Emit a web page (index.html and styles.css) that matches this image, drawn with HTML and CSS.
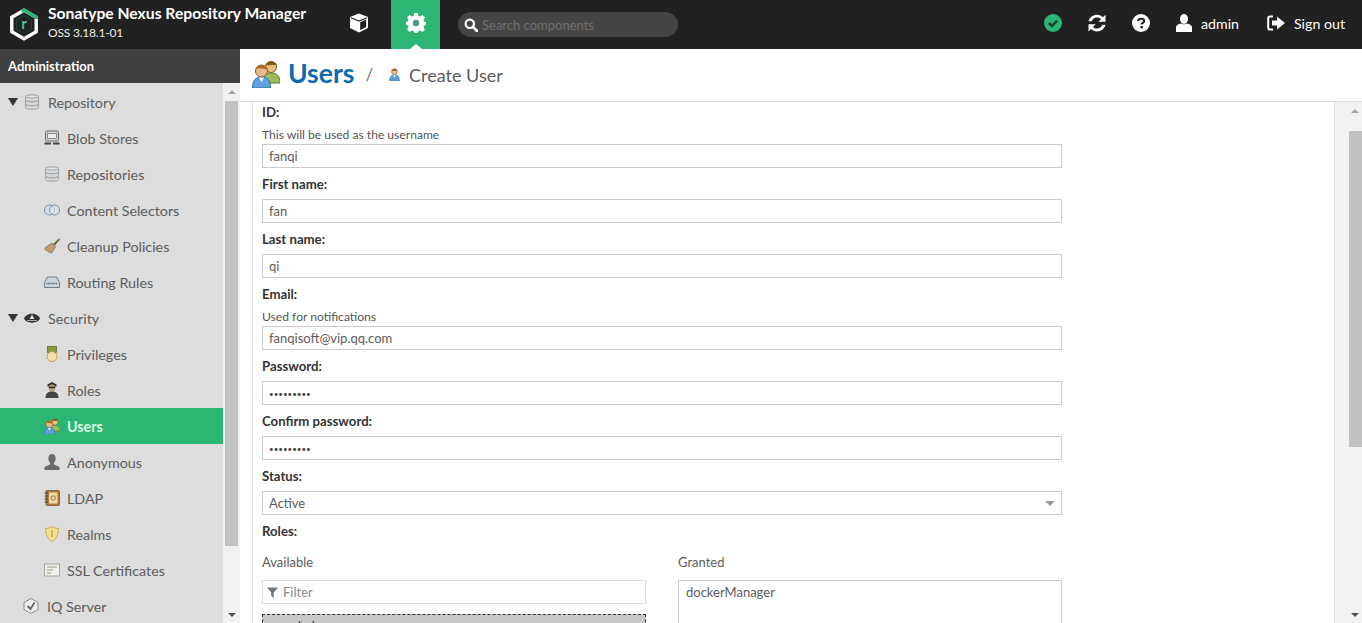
FILE: index.html
```html
<!DOCTYPE html>
<html lang="en">
  <head>
    <meta charset="UTF-8" />
    <meta name="viewport" content="width=device-width, initial-scale=1.0" />
    <title>Create User</title>
    <link rel="stylesheet" href="styles.css">
  </head>
  <body>
    <svg class="defs" width="0" height="0">
      <defs>
        <symbol id="db" viewBox="0 0 16 16">
          <path d="M1.5 2.5C1.5 .2 14.5 .2 14.5 2.5V13.5C14.5 15.8 1.5 15.8 1.5 13.5Z" fill="#d4d6d8" stroke="#a0a4a8"/>
          <path d="M1.5 2.5C3.5 4.5 12.5 4.5 14.5 2.5" fill="#eceeef" stroke="#a0a4a8"/>
          <path d="M1.5 6.5C4 8.3 12 8.3 14.5 6.5M1.5 10.5C4 12.3 12 12.3 14.5 10.5" fill="none" stroke="#9a9ea2"/>
        </symbol>
        <symbol id="person-one" viewBox="0 0 16 16">
          <circle cx="8" cy="4.5" r="3.6" fill="#e8b98a" stroke="#8a5a2b" stroke-width=".7"/>
          <path d="M4.2 3.5C5 .5 11 .5 11.8 3.5C9 3.5 7 3 4.2 3.5Z" fill="#8d5a20"/>
          <path d="M2 16C2 10 4.5 8.5 8 8.5S14 10 14 16Z" fill="#5b9fd6" stroke="#2c6ea6" stroke-width=".7"/>
          <path d="M6.5 9L8 12L9.5 9Z" fill="#fff"/>
        </symbol>
        <symbol id="people" viewBox="0 0 28 28">
          <circle cx="19" cy="7" r="5.5" fill="#e9c07e" stroke="#7b5a20"/>
          <path d="M13.5 5C15 .5 23 0 25 5C21 5 17 5.5 13.5 5Z" fill="#7d5a20"/>
          <path d="M11 23C11 15 14 13 19 13S28 15 28 23Z" fill="#9dbb5c" stroke="#5f7d2b"/>
          <circle cx="9.5" cy="11" r="6" fill="#eab98a" stroke="#8a5a2b"/>
          <path d="M3.5 9C5 3.5 14 3.5 15.5 9C11 9 8 8 3.5 9Z" fill="#b26a22"/>
          <path d="M.5 28C.5 20 4 17 9.5 17S18.5 20 18.5 28Z" fill="#5fa3dc" stroke="#2c6ea6"/>
          <path d="M7 17.5L9.5 22L12 17.5Z" fill="#fff"/>
        </symbol>
      </defs>
    </svg>

    <header class="topbar">
      <div class="brand">
        <svg class="logo" width="30" height="33" viewBox="0 0 30 33">
          <path d="M15 2.2L27.2 9.2V23.8L15 30.8L2.8 23.8V9.2Z" fill="none" stroke="#fff" stroke-width="3.4"/>
          <path d="M12.5 3.2L15 2.2L27.2 9.2V11" fill="none" stroke="#2cb573" stroke-width="3.4"/>
          <path d="M15 7.5L22.5 11.8V21.2L15 25.5L7.5 21.2V11.8Z" fill="none" stroke="#14493a" stroke-width="1"/>
          <text x="15" y="21" text-anchor="middle" class="logo-r">r</text>
        </svg>
        <div class="brand-text">
          <div class="brand-name">Sonatype Nexus Repository Manager</div>
          <div class="brand-ver">OSS 3.18.1-01</div>
        </div>
      </div>
      <div class="mode">
        <svg width="20" height="20" viewBox="0 0 20 20">
          <path d="M10 .5L19 4V15L10 19.5L1 15V4Z" fill="#fff"/>
          <path d="M11.2 9.2V17L17.2 14V6.6Z" fill="#212121"/>
          <path d="M2 4.8L10 8L18 4.8" fill="none" stroke="#212121" stroke-width="1.2"/>
        </svg>
      </div>
      <div class="mode mode-active">
        <svg width="20" height="20" viewBox="0 0 20 20">
          <path d="M8.3 0H11.7L12.3 2.8L14.2 3.6L16.7 2L19 4.4L17.4 6.8L18.2 8.7L20 9V11.9L18.2 12.5L17.4 14.3L19 16.7L16.6 19L14.2 17.4L12.3 18.2L11.7 20H8.3L7.8 18.2L5.9 17.4L3.4 19L1 16.6L2.6 14.2L1.8 12.4L0 11.8V8.9L1.8 8.5L2.6 6.6L1 4.3L3.4 2L5.8 3.6L7.7 2.8Z" fill="#fff"/>
          <circle cx="10" cy="10" r="3.2" fill="#4c9a78"/>
        </svg>
        <span class="mode-caret"></span>
      </div>
      <div class="search">
        <svg width="14" height="14" viewBox="0 0 14 14">
          <circle cx="5.8" cy="5.8" r="4.2" fill="none" stroke="#fff" stroke-width="2.2"/>
          <path d="M9 9L13 13" stroke="#fff" stroke-width="2.6" stroke-linecap="round"/>
        </svg>
        <span>Search components</span>
      </div>
      <nav class="top-actions">
        <svg class="status" width="18" height="18" viewBox="0 0 18 18">
          <circle cx="9" cy="9" r="9" fill="#2cb573"/>
          <path d="M4.8 9L8 12L13.2 6.6" fill="none" stroke="#14492e" stroke-width="2.6"/>
        </svg>
        <svg width="18" height="18" viewBox="1.8 1.8 14.4 14.4">
          <path d="M2.2 7.6C3 4.2 6 2.3 9 2.3C11 2.3 12.6 3.1 13.8 4.3L15.8 2.3V8H10.1L12.2 5.9C11.4 5 10.3 4.6 9 4.6C7 4.6 5.4 5.8 4.8 7.6Z" fill="#fff"/>
          <path d="M15.8 10.4C15 13.8 12 15.7 9 15.7C7 15.7 5.4 14.9 4.2 13.7L2.2 15.7V10H7.9L5.8 12.1C6.6 13 7.7 13.4 9 13.4C11 13.4 12.6 12.2 13.2 10.4Z" fill="#fff"/>
        </svg>
        <svg width="18" height="18" viewBox="0 0 18 18">
          <circle cx="9" cy="9" r="9" fill="#fff"/>
          <path d="M6 7C6 3.9 12.2 3.9 12.2 7C12.2 9 9.6 8.8 9.6 10.6" fill="none" stroke="#212121" stroke-width="2.1"/>
          <rect x="8.4" y="12" width="2.4" height="2.4" fill="#212121"/>
        </svg>
        <div class="top-user">
          <svg width="16" height="18" viewBox="0 0 16 18">
            <ellipse cx="8" cy="5" rx="4" ry="5" fill="#fff"/>
            <path d="M0 18V13.5C0 11 3 10 5 9.5C6 10.5 10 10.5 11 9.5C13 10 16 11 16 13.5V18Z" fill="#fff"/>
          </svg>
          <span>admin</span>
        </div>
        <div class="top-signout">
          <svg width="18" height="16" viewBox="0 0 18 16">
            <path d="M6 1.5H3C2 1.5 1.2 2.3 1.2 3.3V12.7C1.2 13.7 2 14.5 3 14.5H6" fill="none" stroke="#fff" stroke-width="2"/>
            <path d="M5 5.5H10V1.5L18 8L10 14.5V10.5H5Z" fill="#fff"/>
          </svg>
          <span>Sign out</span>
        </div>
      </nav>
    </header>

    <div class="layout">
      <aside class="sidebar">
        <div class="side-head">Administration</div>
        <div class="side-body">
          <ul class="tree">
            <li class="row top"><span class="arrow"></span><svg class="ico" viewBox="0 0 16 16"><use href="#db"/></svg>Repository</li>
            <li class="row">
              <svg class="ico" viewBox="0 0 16 16">
                <rect x="1.5" y="1" width="13" height="10" rx="1.5" fill="#d5d5d5" stroke="#666"/>
                <rect x="3.5" y="3.5" width="9" height="5" fill="#eee" stroke="#777" stroke-width=".8"/>
                <path d="M.5 13.5H7M9 13.5H15.5" stroke="#444" stroke-width="2.2"/>
              </svg>Blob Stores
            </li>
            <li class="row"><svg class="ico" viewBox="0 0 16 16"><use href="#db"/></svg>Repositories</li>
            <li class="row">
              <svg class="ico" viewBox="0 0 16 16">
                <circle cx="5.5" cy="8" r="5" fill="#d7e0ea" stroke="#7d93a8"/>
                <circle cx="10.5" cy="8" r="5" fill="#dfe6ee" fill-opacity=".5" stroke="#7d93a8"/>
              </svg>Content Selectors
            </li>
            <li class="row">
              <svg class="ico" viewBox="0 0 16 16">
                <path d="M1 10L8 5L11.5 9L7.5 15C5 14.5 2.5 12 1 11.5Z" fill="#c5a26d" stroke="#7a6238" stroke-width=".7"/>
                <path d="M9 6L15 .5L16 1.5L10.8 7.8Z" fill="#5f6b3a"/>
              </svg>Cleanup Policies
            </li>
            <li class="row">
              <svg class="ico" viewBox="0 0 16 16">
                <path d="M3.5 3H12.5L15.5 8.5V13.5H.5V8.5Z" fill="#ccd3da" stroke="#6f7c89"/>
                <path d="M2.5 9.5H13.5" stroke="#56636f" stroke-width="1.6" stroke-dasharray="1 .6"/>
              </svg>Routing Rules
            </li>
            <li class="row top"><span class="arrow"></span>
              <svg class="ico" viewBox="0 0 16 16">
                <path d="M0 8.5C2 2 14 2 16 8.5C14 14 2 14 0 8.5Z" fill="#333"/>
                <path d="M5.5 9L8 4.5L10.5 9Z" fill="#ddd"/>
                <path d="M3 10.5H13" stroke="#aaa"/>
              </svg>Security
            </li>
            <li class="row">
              <svg class="ico" viewBox="0 0 16 16">
                <rect x="3.5" y="0.5" width="9" height="6" fill="#8a9a3e" stroke="#55602a" stroke-width=".7"/>
                <circle cx="8" cy="10.5" r="5" fill="#f2e0ae" stroke="#c09a4c"/>
              </svg>Privileges
            </li>
            <li class="row">
              <svg class="ico" viewBox="0 0 16 16">
                <path d="M3.5 2.5L8 0L12.5 2.5V4.5H3.5Z" fill="#2e2e2e"/>
                <circle cx="8" cy="6" r="3.4" fill="#b89a7e"/>
                <path d="M4.8 5.4H11.2" stroke="#222" stroke-width="1.4"/>
                <path d="M1.5 16C1.5 11 4.5 9.5 8 9.5S14.5 11 14.5 16Z" fill="#444"/>
              </svg>Roles
            </li>
            <li class="row active">
              <svg class="ico" viewBox="0 0 28 28"><use href="#people"/></svg>Users
            </li>
            <li class="row">
              <svg class="ico" viewBox="0 0 16 16">
                <ellipse cx="8" cy="4.5" rx="3.6" ry="4.5" fill="#6b6b6b"/>
                <path d="M6.3 8H9.7L10 10.5L15.5 13V16H.5V13L6 10.5Z" fill="#6b6b6b"/>
              </svg>Anonymous
            </li>
            <li class="row">
              <svg class="ico" viewBox="0 0 16 16">
                <rect x="2" y=".5" width="13.5" height="15" rx="1" fill="#a9793c" stroke="#6b4a20" stroke-width=".7"/>
                <rect x="5" y="2.5" width="8.5" height="11" fill="#efd9a8"/>
                <path d="M.5 3H4M.5 6H4M.5 9H4M.5 12H4" stroke="#444" stroke-width="1.1"/>
                <circle cx="9.2" cy="8" r="2.2" fill="none" stroke="#b06a2a"/>
              </svg>LDAP
            </li>
            <li class="row">
              <svg class="ico" viewBox="0 0 16 16">
                <path d="M8 .5C10 2 12.5 2.5 14.5 2.5C14.5 9 12 13.5 8 15.5C4 13.5 1.5 9 1.5 2.5C3.5 2.5 6 2 8 .5Z" fill="#f0e096" stroke="#cda94e"/>
                <path d="M8 4V11" stroke="#cda94e" stroke-width="1.6"/>
              </svg>Realms
            </li>
            <li class="row">
              <svg class="ico" viewBox="0 0 16 16">
                <rect x=".5" y="2" width="15" height="12" fill="#f1f1ea" stroke="#a7a7a0"/>
                <path d="M3 5H13M3 8H9M3 11H7" stroke="#8f9a8a"/>
              </svg>SSL Certificates
            </li>
            <li class="row top">
              <svg class="ico ico-iq" viewBox="0 0 16 16">
                <path d="M8 .5L15 4.5V11.5L8 15.5L1 11.5V4.5Z" fill="#eee" stroke="#8c8c8c"/>
                <path d="M4.5 8L7.5 11L11.5 4.5" fill="none" stroke="#666" stroke-width="1.8"/>
              </svg>IQ Server
            </li>
          </ul>
          <div class="track side-track">
            <span class="up"></span>
            <span class="thumb"></span>
            <span class="down"></span>
          </div>
        </div>
      </aside>

      <main class="content">
        <div class="title-bar">
          <svg class="title-ico" width="28" height="28"><use href="#people"/></svg>
          <h1>Users</h1>
          <span class="sep">/</span>
          <svg class="crumb-ico" width="13" height="15" viewBox="0 0 16 16"><use href="#person-one"/></svg>
          <span class="crumb">Create User</span>
        </div>
        <div class="pane">
          <form class="form">
            <div class="field">
              <label>ID:</label>
              <p class="help">This will be used as the username</p>
              <div class="input">fanqi</div>
            </div>
            <div class="field">
              <label>First name:</label>
              <div class="input">fan</div>
            </div>
            <div class="field">
              <label>Last name:</label>
              <div class="input">qi</div>
            </div>
            <div class="field">
              <label>Email:</label>
              <p class="help">Used for notifications</p>
              <div class="input">fanqisoft@vip.qq.com</div>
            </div>
            <div class="field">
              <label>Password:</label>
              <div class="input dots">•••••••••</div>
            </div>
            <div class="field">
              <label>Confirm password:</label>
              <div class="input dots">•••••••••</div>
            </div>
            <div class="field">
              <label>Status:</label>
              <div class="input select">Active<span class="select-caret"></span></div>
            </div>
            <div class="field">
              <label>Roles:</label>
            </div>
            <div class="roles">
              <div class="role-col">
                <div class="role-title">Available</div>
                <div class="input filter">
                  <svg width="11" height="11" viewBox="0 0 11 11"><path d="M0 .5H11L6.8 5.5V11L4.2 9V5.5Z" fill="#777"/></svg>
                  Filter
                </div>
                <div class="role-item">nx-admin</div>
              </div>
              <div class="role-col">
                <div class="role-title">Granted</div>
                <div class="role-box">dockerManager</div>
              </div>
            </div>
          </form>
          <div class="track main-track">
            <span class="up"></span>
            <span class="thumb"></span>
            <span class="down"></span>
          </div>
        </div>
      </main>
    </div>
  </body>
</html>
```
FILE: styles.css
```css
* {
  margin: 0;
  padding: 0;
  box-sizing: border-box;
}

body {
  height: 623px;
  overflow: hidden;
  background-color: #fff;
  font-family: "Lato", "Liberation Sans", sans-serif;
  font-size: 13px;
  color: #333;
}

.defs {
  position: absolute;
}

.topbar {
  height: 49px;
  display: flex;
  align-items: center;
  background-color: #212121;
  color: #fff;
}

.brand {
  width: 334px;
  display: flex;
  align-items: center;
  padding-left: 9px;
  gap: 9px;
  white-space: nowrap;
}

.logo-r {
  font-family: "Lato", sans-serif;
  font-size: 15px;
  font-weight: 700;
  fill: #3fc48a;
}

.brand-name {
  font-size: 15.7px;
  font-weight: 700;
  line-height: 18px;
  margin-top: -2px;
}

.brand-ver {
  font-size: 12px;
  line-height: 22px;
  letter-spacing: -.2px;
  color: #eee;
}

.mode {
  width: 49px;
  height: 49px;
  display: flex;
  align-items: center;
  justify-content: center;
  margin-right: 8px;
  padding-bottom: 3px;
}

.mode-active {
  position: relative;
  margin: 0;
  background-color: #2cb573;
}

.mode-caret {
  position: absolute;
  left: 19px;
  bottom: 0;
  border-left: 6px solid transparent;
  border-right: 6px solid transparent;
  border-bottom: 5px solid #fff;
}

.search {
  width: 220px;
  height: 25px;
  margin-left: 18px;
  display: flex;
  align-items: center;
  gap: 4px;
  padding-left: 6px;
  border-radius: 13px;
  background-color: #454545;
  color: #6f6f6f;
  font-size: 13px;
}

.top-actions {
  margin-left: auto;
  display: flex;
  align-items: center;
  gap: 26px;
  padding-right: 17px;
  padding-bottom: 3px;
  font-size: 14.2px;
}

.top-user,
.top-signout {
  display: flex;
  align-items: center;
  gap: 9px;
}

.top-signout {
  margin-left: 2px;
}

.layout {
  height: 574px;
  display: flex;
}

.sidebar {
  width: 240px;
  background-color: #ddd;
}

.side-head {
  height: 34px;
  line-height: 35px;
  padding-left: 8px;
  font-weight: 700;
  color: #fff;
  background-color: #404040;
}

.side-body {
  height: 540px;
  display: flex;
}

.tree {
  width: 223px;
  list-style: none;
  padding-top: 1px;
  font-size: 14.3px;
  color: #5c5c5c;
  overflow: hidden;
}

.row {
  height: 36px;
  display: flex;
  align-items: center;
  padding-left: 44px;
}

.row.top {
  padding-left: 8px;
}

.arrow {
  width: 0;
  margin-right: 6px;
  border-left: 5px solid transparent;
  border-right: 5px solid transparent;
  border-top: 8px solid #333;
}

.ico {
  width: 16px;
  height: 16px;
  margin-right: 7px;
  flex-shrink: 0;
}

.row.top .ico {
  margin-right: 8px;
}

.row .ico-iq {
  margin-left: 15px;
}

.row.active {
  background-color: #2cb573;
  color: #d9ffe9;
  font-weight: 700;
}

.track {
  display: flex;
  flex-direction: column;
  align-items: center;
  background-color: #f1f1f1;
}

.side-track {
  width: 17px;
}

.thumb {
  display: block;
  background-color: #c1c1c1;
}

.up,
.down {
  display: block;
  width: 0;
  border-left: 4px solid transparent;
  border-right: 4px solid transparent;
}

.up {
  border-bottom: 4px solid #a3a3a3;
  margin-top: 7px;
}

.down {
  border-top: 4px solid #505050;
  margin-top: auto;
  margin-bottom: 6px;
}

.side-track .thumb {
  width: 13px;
  height: 445px;
  margin-top: 7px;
}

.content {
  flex: 1;
  min-width: 0;
}

.title-bar {
  height: 53px;
  display: flex;
  align-items: center;
  padding-left: 12px;
  padding-bottom: 2px;
  border-bottom: 1px solid #ddd;
}

.title-bar h1 {
  margin-left: 8px;
  padding-bottom: 2px;
  font-size: 26.5px;
  font-weight: 700;
  color: #0a6cb0;
}

.sep {
  margin: 0 15px 0 11px;
  font-size: 17px;
  color: #777;
}

.crumb {
  margin-left: 8px;
  padding-top: 2px;
  font-size: 18px;
  font-weight: 400;
  color: #5c5c5c;
}

.pane {
  height: 521px;
  display: flex;
}

.form {
  width: 1083px;
  margin-left: 12px;
  padding-left: 9px;
  border-left: 1px solid #ddd;
  border-right: 1px solid #ddd;
  overflow: hidden;
}

.field {
  width: 800px;
  margin-bottom: 6px;
}

.field label {
  display: block;
  height: 20px;
  line-height: 20px;
  font-size: 13.2px;
  font-weight: 700;
  margin-bottom: 5px;
}

.help {
  height: 14px;
  line-height: 16px;
  margin-bottom: 3px;
  font-size: 12.1px;
  color: #555;
}

.input {
  height: 24px;
  line-height: 23px;
  padding-left: 6px;
  border: 1px solid #ccc;
  background-color: #fff;
  color: #5c5c5c;
}

.dots {
  line-height: 25px;
  font-size: 8px;
  color: #444;
}

.select {
  display: flex;
  justify-content: space-between;
  align-items: center;
  padding-right: 6px;
}

.select-caret {
  border-left: 5px solid transparent;
  border-right: 5px solid transparent;
  border-top: 5px solid #999;
}

.roles {
  width: 800px;
  display: flex;
  gap: 32px;
}

.role-col {
  flex: 1;
}

.role-title {
  height: 20px;
  line-height: 20px;
  margin-top: 5px;
  margin-bottom: 8px;
  color: #5c5c5c;
}

.filter {
  display: flex;
  align-items: center;
  gap: 5px;
  padding-left: 4px;
  border-color: #ddd;
  color: #888;
}

.role-item {
  height: 40px;
  margin-top: 10px;
  padding-left: 6px;
  line-height: 23px;
  border: 1px dashed #333;
  background-color: #c8c8c8;
}

.role-box {
  height: 120px;
  padding: 3px 7px;
  border: 1px solid #ccc;
  line-height: 16px;
  color: #5c5c5c;
}

.main-track {
  width: 27px;
  align-items: flex-end;
}

.main-track .up,
.main-track .down {
  margin-right: 3px;
}

.main-track .thumb {
  width: 13px;
  height: 316px;
  margin-top: 18px;
}
```
